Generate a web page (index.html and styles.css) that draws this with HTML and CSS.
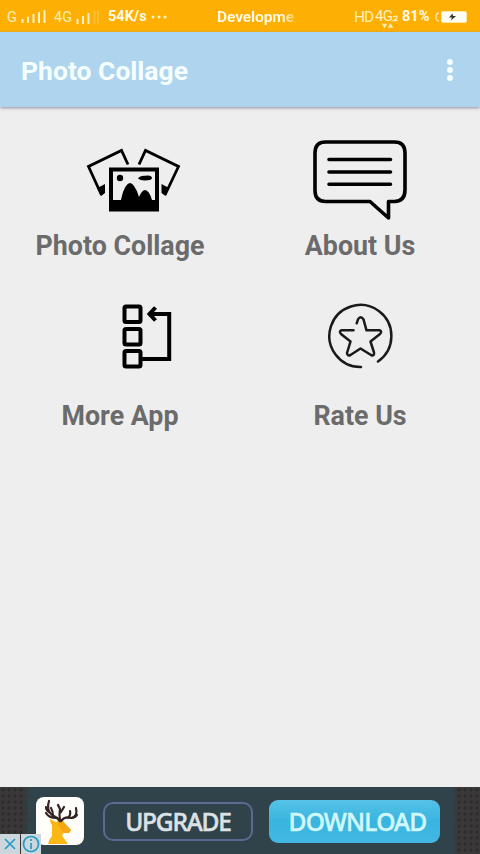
FILE: index.html
```html
<!DOCTYPE html>
<html lang="en">
<head>
<meta charset="utf-8">
<title>Photo Collage</title>
<link rel="stylesheet" href="styles.css">
</head>
<body>
<header class="status">
  <span class="net net-g">G</span>
  <svg class="bars bars-a" width="26" height="16" viewBox="0 0 26 16"><path d="M1.500 10v4M7 7.500v6.500M12.500 5v9M18 3v11M23.500 1v13"/></svg>
  <span class="net net-4g">4G</span>
  <svg class="bars bars-b" width="24" height="16" viewBox="0 0 24 16"><path d="M1.500 10v5M7 7v8M12.500 4v11"/><path opacity=".25" d="M18.500 2v13M22 1v14"/></svg>
  <span class="speed">54K/s</span>
  <svg class="dots" width="18" height="4" viewBox="0 0 18 4"><circle cx="3" cy="2" r="1.500"/><circle cx="9" cy="2" r="1.500"/><circle cx="15" cy="2" r="1.500"/></svg>
  <span class="ticker">Developme</span>
  <span class="hd">HD</span>
  <span class="lte">4G</span>
  <svg class="data" width="16" height="20" viewBox="0 0 16 20"><path d="M11 8q4-2 4 .5q0 1-3.500 3h4M1 15.500l1.500 2.500 1.500-2.500zM7 18l1.500-2.500 1.500 2.500z"/></svg>
  <span class="percent">81%</span>
  <svg class="battery" width="35" height="14" viewBox="0 0 35 14"><path d="M5 3q-3 0-3 4t3 4" fill="none" stroke="#ffe8a5" stroke-width="1.300"/><rect x="7.500" y="1.500" width="25" height="11" rx="1.500" fill="#fffef2" stroke="#ffe8a5"/><path d="M18.500 3.500l-3.500 4h3l-1 3 5-4.500h-3z" fill="#303030"/></svg>
</header>
<div class="appbar">
  <h1 class="title">Photo Collage</h1>
  <svg class="menu" width="8" height="24" viewBox="0 0 8 24"><circle cx="4" cy="3" r="2.900"/><circle cx="4" cy="11" r="2.900"/><circle cx="4" cy="19" r="2.900"/></svg>
</div>
<main class="grid">
  <section class="item">
    <div class="art art-photo"><svg width="100" height="85" viewBox="83 135 100 85">
      <g fill="none" stroke="#000" stroke-width="2.800"><path d="M128 164.500L121.500 150.500L88.500 166.500L101.500 195M139 164.500L145.500 150.500L178.500 166.500L165 195"/></g>
      <path d="M97.500 188l7.500-4v9l-4 3zM169 188l-7.500-4v9l4 3z"/>
      <path fill-rule="evenodd" d="M109 167.500h50v44h-50zM113 171.500v28.500h42v-28.500z"/>
      <circle cx="120" cy="178" r="3.200"/><path d="M138 178.500q2-3 7-2.700q6-1.300 7 1.700q0 3-5 2.700q-6 .8-9-1.700z"/>
      <path d="M112 200h9q2-10 5-14q4-6 8 0q3 4 5 11q3-7 6-7q4 0 7 10h4v7h-44z"/>
    </svg></div>
    <h2 class="label">Photo Collage</h2>
  </section>
  <section class="item">
    <div class="art"><svg width="100" height="85" viewBox="310 135 100 85"><g fill="none" stroke="#000" stroke-width="3.600" stroke-linejoin="round" stroke-linecap="round"><path d="M325.500 142h69q10.500 0 10.500 11v37q0 11-10.500 11.500H388.500V218L370 201.500H325.500Q315 201.500 315 190.500V153Q315 142 325.500 142z"/><path d="M329 159.500h61.500M329 172h61.500M329 184.200h61.500"/></g></svg></div>
    <h2 class="label">About Us</h2>
  </section>
  <section class="item">
    <div class="art art-more"><svg width="60" height="72" viewBox="117 300 60 72"><g fill="none" stroke="#000" stroke-width="4"><rect x="124.500" y="306.500" width="16" height="15.500" rx="1.500"/><rect x="124.500" y="329" width="16" height="15.500" rx="1.500"/><rect x="124.500" y="351" width="16" height="15.500" rx="1.500"/><path d="M142 359h27.200v-45H151M155.500 307.500L149.500 314l6 6.500"/></g></svg></div>
    <h2 class="label label-more">More App</h2>
  </section>
  <section class="item">
    <div class="art"><svg width="70" height="72" viewBox="325 300 70 72"><g fill="none" stroke="#1a1a1a" stroke-width="2.500" stroke-linecap="round" stroke-linejoin="round"><path d="M361 367A31 31 0 1 1 378 361.500"/><path d="M353.500 330.300H341.500q-2.800 1-.5 3.700l9.500 7.500-3.500 11.500q.3 3.500 3.500 2l10-6.500 10.500 6.500q3.500 1.500 3-2.500l-3.500-11 9.500-7.500q2.500-2.700-.5-3.700H366.500l-3-11q-3-4-5.500 0l-1.300 4"/></g></svg></div>
    <h2 class="label">Rate Us</h2>
  </section>
</main>
<footer class="ad">
  <div class="logo"><svg width="48" height="48" viewBox="36 797 48 48">
    <path fill="#fbb714" d="M48 844q1-5 4-8v-11q-2-2-2-6l6 3h6l9 8-2 3h-5q-3 2-1 4l5 7z"/>
    <path fill="#f5a714" d="M57 821h6l8 9-2 3h-5q-5-4-7-12z"/>
    <g fill="none" stroke="#332322" stroke-width="2.200" stroke-linecap="round" stroke-linejoin="round"><path d="M60 821q-3-4-8-6q-6-5-3-14M56 818q-7 0-10-5M49 812q-3-2-3-5M53 816q0-5-2-8M60 821q-1-7 0-12l-2-4M61 812l3-5M61 821q4-5 10-3 7-1 5-10M68 818q3-3 2-7M72 818q3 0 5-3"/></g>
  </svg></div>
  <div class="upgrade"><span class="cta cta-upgrade">UPGRADE</span></div>
  <div class="download"><span class="cta cta-download">DOWNLOAD</span></div>
  <div class="adchoices">
    <svg width="20" height="20" viewBox="0 0 20 20"><path d="M5 5l10 10M15 5L5 15"/></svg>
    <svg width="20" height="20" viewBox="0 0 20 20"><circle cx="10" cy="10" r="7.500"/><path d="M10 9v6M10 5v2"/></svg>
  </div>
</footer>
</body>
</html>
```

FILE: styles.css
```css
* { box-sizing: border-box; }
body {
  margin: 0;
  height: 854px;
  display: flex;
  flex-direction: column;
  overflow: hidden;
  background: #eee;
  font-family: Roboto, "Liberation Sans", sans-serif;
}
svg { display: block; flex: none; }

.status {
  height: 32px;
  flex: none;
  display: flex;
  align-items: center;
  padding: 2px 0 0 7px;
  background: #fdaf03;
  color: #fffbe6;
  white-space: nowrap;
  line-height: 18px;
}
.status > * { flex: none; }
.net { font-size: 14.5px; color: #ffedb6; padding-top: 2px; }
.net-g { width: 14px; }
.net-4g { width: 21px; margin-left: 7px; }
.bars { stroke: #fff1c4; stroke-width: 2; }
.bars-b { margin-left: 1px; }
.speed { width: 41px; margin-left: 8px; font-size: 14.5px; font-weight: 700; }
.dots { margin-left: 1px; fill: #fff3c4; }
.ticker {
  width: 83px;
  margin-left: 49px;
  overflow: hidden;
  font-size: 15.5px;
  font-weight: 700;
  letter-spacing: -.1px;
  background: linear-gradient(90deg, #fffbe6 66px, transparent 84px);
  background-clip: text;
  -webkit-background-clip: text;
  color: transparent;
}
.hd { width: 21px; margin-left: 54px; font-size: 15.5px; letter-spacing: -1px; color: #fff0bd; }
.lte { width: 19px; font-size: 15px; letter-spacing: -.6px; color: #fff0bd; margin-top: -3px; }
.data { margin: 4px 0 0 -12px; fill: none; stroke: #fff0bd; stroke-width: 1.4; }
.percent { width: 31px; margin-left: 4px; font-size: 14.5px; font-weight: 700; }
.battery { margin-left: 1px; }

.appbar {
  height: 75px;
  flex: none;
  display: flex;
  align-items: center;
  justify-content: space-between;
  padding: 2px 26px 0 21px;
  background: linear-gradient(#a6d7f4, #aed4ee 8px);
  box-shadow: 0 1px 3px #8d929c;
}
.title {
  margin: 0;
  color: #f5ffff;
  font-size: 26.5px;
  line-height: 32px;
  font-weight: 700;
  white-space: nowrap;
}
.menu { fill: #f5ffff; }

.grid {
  flex: 1;
  display: grid;
  grid-template-columns: 240px 240px;
  grid-template-rows: 127px 70px;
  row-gap: 38px;
  padding-top: 28px;
}
.item { display: flex; flex-direction: column; align-items: center; }
.art-photo { margin-left: 26px; }
.art-more { margin-left: 54px; }
.label {
  margin: 10px 0 0;
  color: #6b6b6b;
  font-size: 26.8px;
  line-height: 32px;
  font-weight: 700;
  white-space: nowrap;
}
.item:nth-child(n+3) .label { margin-top: 28px; }

.ad {
  position: relative;
  height: 67px;
  flex: none;
  display: flex;
  align-items: flex-start;
  padding: 10px 0 0 36px;
  background:
    linear-gradient(90deg, transparent 24px, #30424a 28px 453px, transparent 457px),
    radial-gradient(circle, #2c2b2d 1.1px, transparent 1.9px) 0 0 / 6px 6px,
    #3b3839;
}
.logo { width: 48px; height: 48px; border-radius: 8px; background: #fffefb; }
.upgrade, .download { display: flex; align-items: center; justify-content: center; flex: none; }
.upgrade { width: 150px; height: 39px; margin: 5px 0 0 19px; border: 2px solid #596b91; border-radius: 10px; }
.download {
  width: 171px;
  height: 43px;
  margin: 3px 0 0 16px;
  padding-left: 6px;
  border-radius: 9px;
  background: linear-gradient(#57c2e7, #38b4df 50%, #43b8e2);
}
.cta { font-family: "Noto Sans", "Open Sans", sans-serif; font-size: 24.5px; line-height: 34px; font-weight: 500; -webkit-text-stroke: .5px currentColor; }
.cta-upgrade { color: #dce1e5; letter-spacing: -1.2px; }
.cta-download { color: #d1f8ff; letter-spacing: -.8px; }
.adchoices { position: absolute; left: 0; bottom: 0; display: flex; gap: 1px; }
.adchoices svg { background: #cbd7dd; fill: none; stroke: #269bc3; stroke-width: 1.7; }
```
